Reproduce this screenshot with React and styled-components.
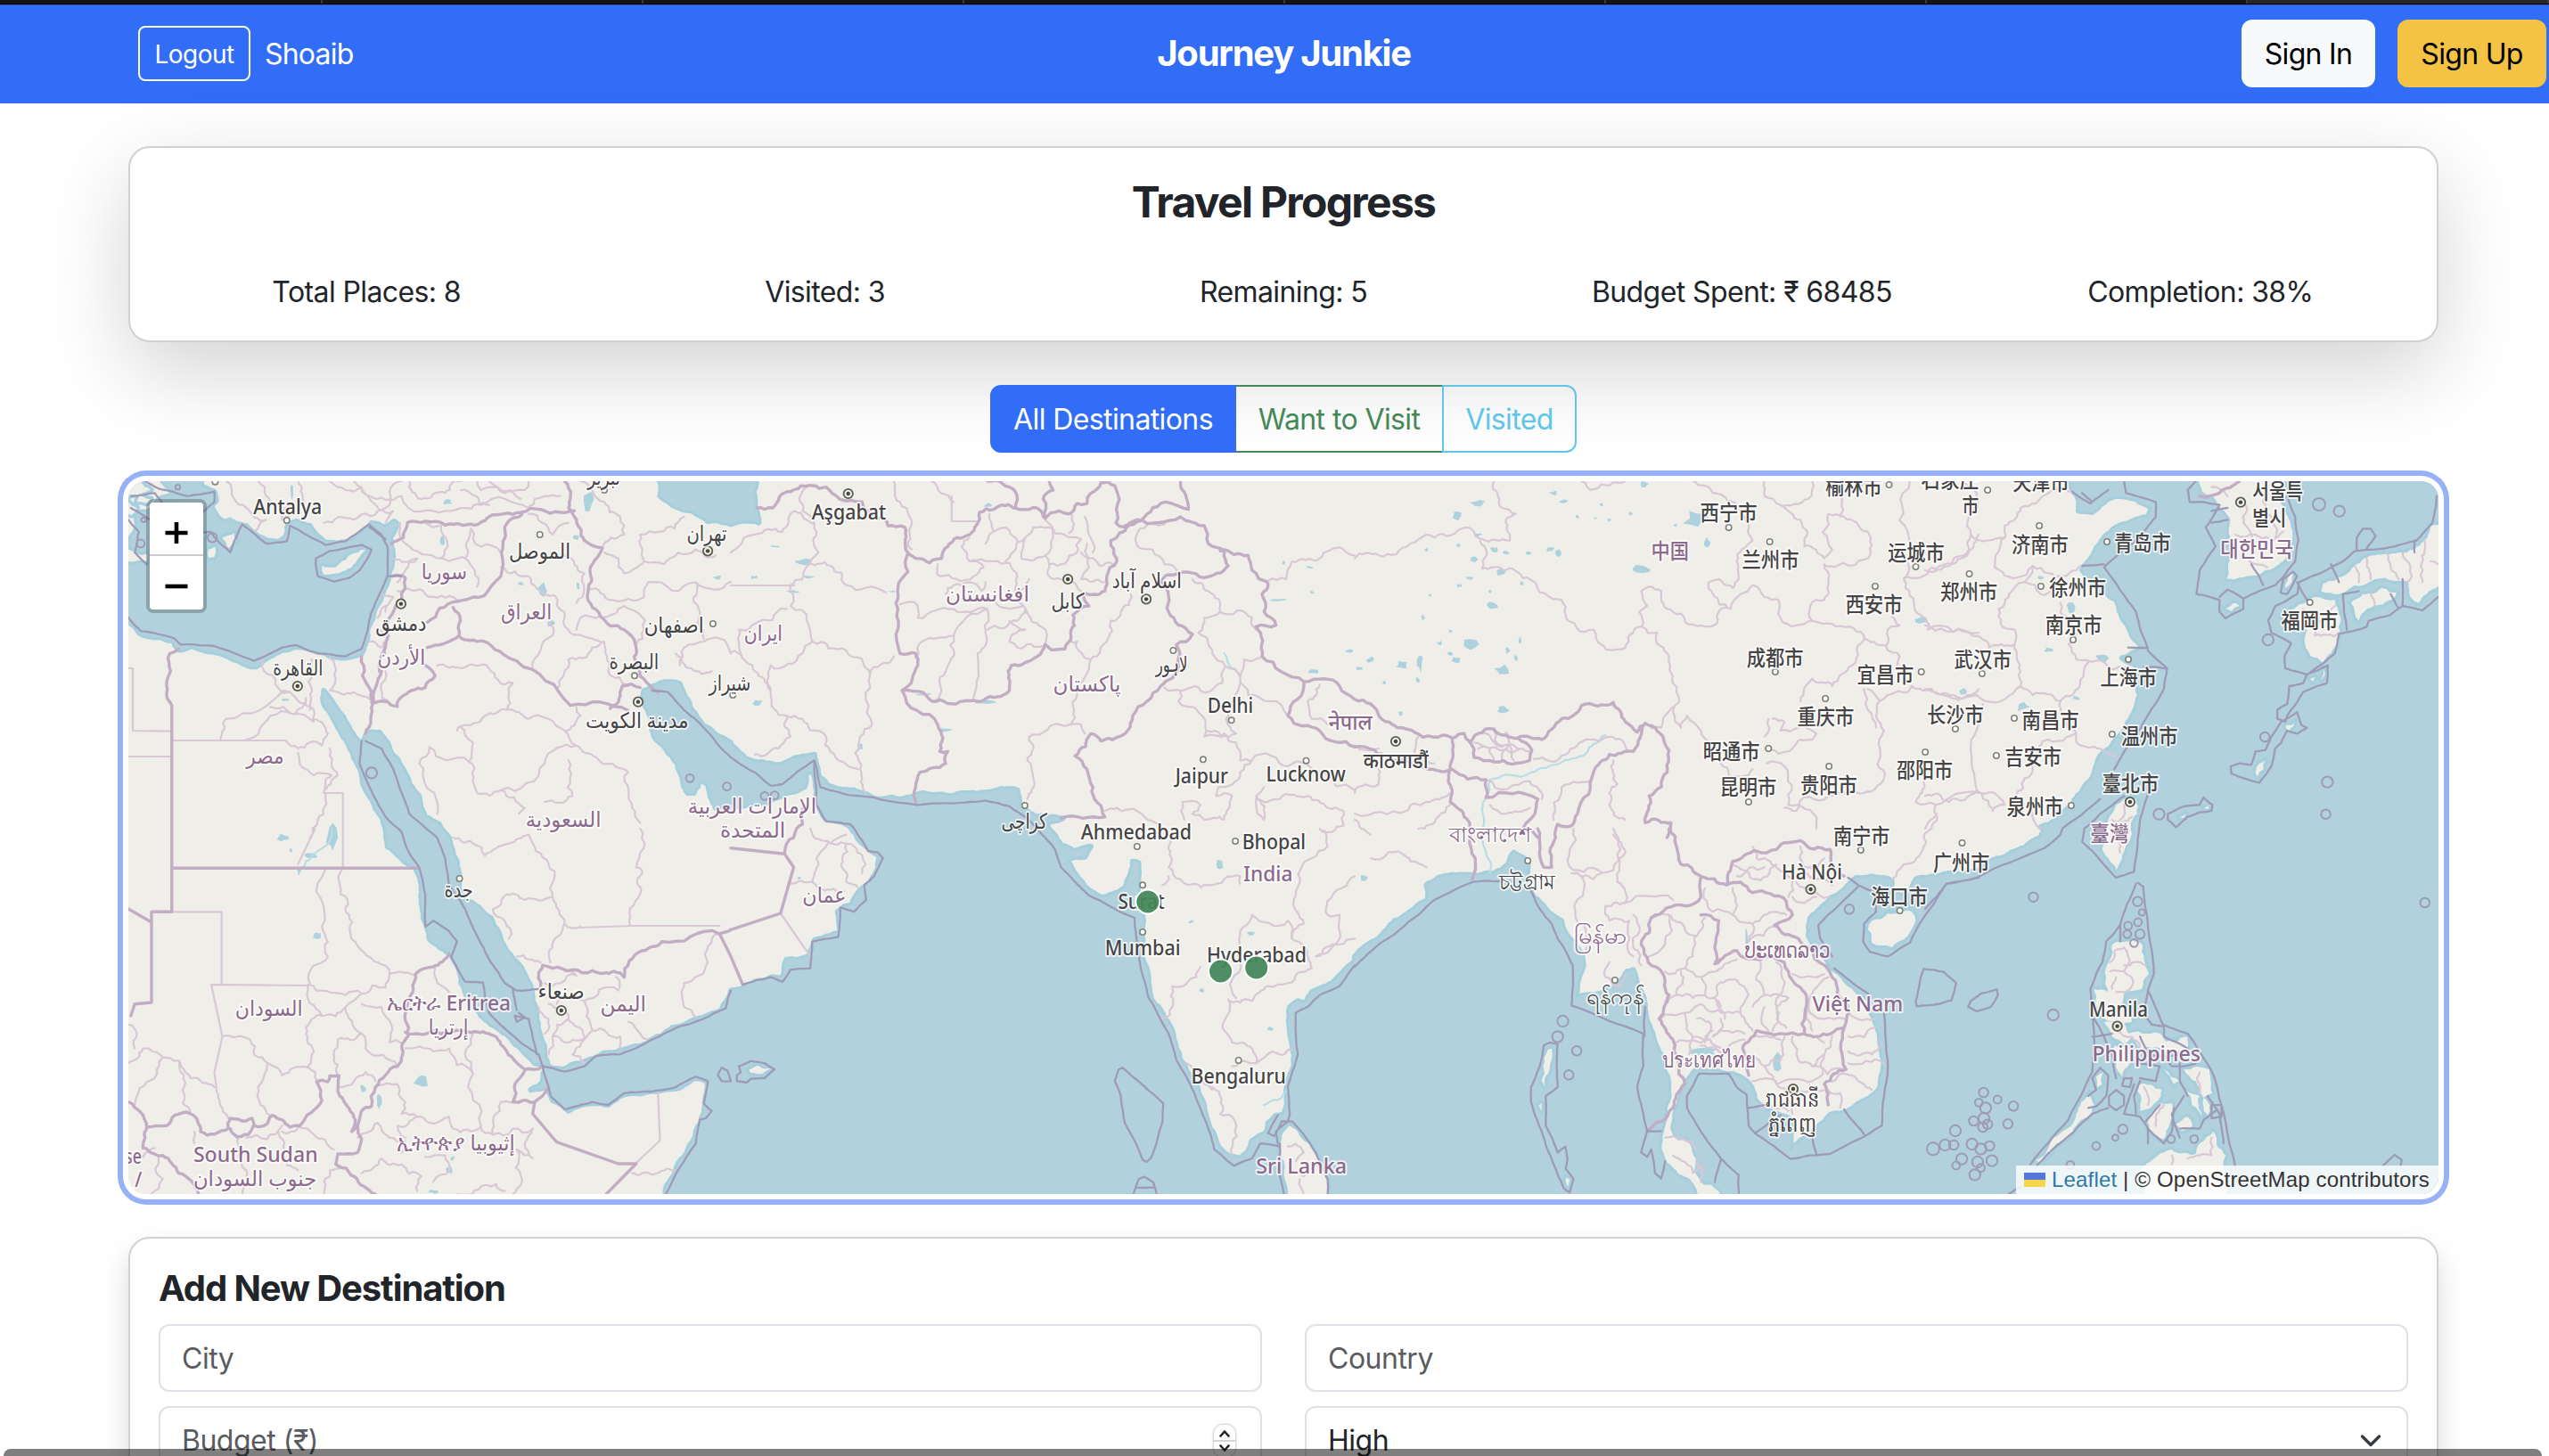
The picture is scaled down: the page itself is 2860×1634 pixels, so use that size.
import React from 'react';
import styled, { createGlobalStyle } from 'styled-components';

const GlobalStyle = createGlobalStyle`
  * { box-sizing: border-box; }
  html, body { margin: 0; padding: 0; }
  body {
    background: #fff;
    color: #212529;
    font-family: Inter, "Noto Sans", "Liberation Sans", sans-serif;
    font-size: 32px;
    line-height: 48px;
    overflow: hidden;
  }
`;

/* ---------- page chrome ---------- */

const Page = styled.div`
  display: flex;
  flex-direction: column;
  position: relative;
  width: 2860px;
  height: 1634px;
  overflow: hidden;
`;

const TabStrip = styled.div`
  display: grid;
  grid-template-columns: 362px repeat(6, 360px) 1fr;
  flex: none;
  height: 5px;
  background: #141414;
  border-bottom: 1px solid #000;
`;

const TabEdge = styled.span`
  background: ${(p) => (p.$active ? '#262626' : '#141414')};
  border-right: 2px solid #3a3a3a;
`;

const Navbar = styled.header`
  display: grid;
  grid-template-columns: 1fr auto 1fr;
  align-items: center;
  flex: none;
  height: 111px;
  padding: 0 3px 2px 24px;
  background: #316df6;
  border-top: 1px solid #2a55b5;
  color: #fff;
`;

const NavSide = styled.div`
  display: flex;
  align-items: center;
  justify-content: ${(p) => (p.$end ? 'flex-end' : 'flex-start')};
  gap: ${(p) => (p.$end ? 25 : 16)}px;
  padding-left: ${(p) => (p.$end ? 0 : 131)}px;
`;

const LogoutButton = styled.button`
  width: 126px;
  height: 62px;
  padding: 2px 0 0;
  border: 2px solid #fff;
  border-radius: 8px;
  background: transparent;
  color: #fff;
  font: 400 28px/42px Inter, sans-serif;
  letter-spacing: -0.55px;
`;

const UserName = styled.span`
  padding-top: 2px;
  letter-spacing: -0.8px;
`;

const Brand = styled.h1`
  margin: 0;
  font-size: 40px;
  font-weight: 700;
  line-height: 60px;
  letter-spacing: -1.25px;
`;

const NavButton = styled.button`
  width: ${(p) => p.$w}px;
  height: 76px;
  padding: 2px 0 0;
  border: 0;
  border-radius: 12px;
  background: ${(p) => p.$bg};
  color: #000;
  font: 400 32px/48px Inter, sans-serif;
  letter-spacing: -0.7px;
`;

const Main = styled.main`
  display: flex;
  flex-direction: column;
  flex: none;
  padding: 48px 124px 0 144px;
`;

const Card = styled.section`
  flex: none;
  border: 2px solid #d0d0d0;
  border-radius: 24px;
  background: #fff;
  box-shadow: ${(p) => p.$shadow};
`;

const ProgressCard = styled(Card)`
  height: 220px;
  padding: 32px 8px 0;
`;

const CardTitle = styled.h2`
  margin: 0;
  font-size: ${(p) => p.$size}px;
  font-weight: 700;
  line-height: 58px;
  letter-spacing: ${(p) => p.$ls}px;
  text-align: ${(p) => p.$align};
`;

const Stats = styled.div`
  display: grid;
  grid-template-columns: repeat(5, 1fr);
  margin-top: 48px;
  text-align: center;
  letter-spacing: -0.6px;
  line-height: 48px;
`;

const Filters = styled.div`
  display: flex;
  align-self: center;
  margin: 48px 0 32px;
`;

const FilterButton = styled.button`
  width: ${(p) => p.$w}px;
  height: 76px;
  padding: 2px 0 0;
  border: 2px solid ${(p) => p.$color};
  ${(p) => (p.$open ? 'border-right: 0; border-left: 0;' : '')}
  border-radius: ${(p) => p.$radius};
  background: ${(p) => (p.$filled ? p.$color : 'transparent')};
  color: ${(p) => (p.$filled ? '#fff' : p.$color)};
  font: 400 32px/48px Inter, sans-serif;
  letter-spacing: -0.6px;
`;

/* ---------- map ---------- */

const MapFrame = styled.div`
  position: relative;
  flex: none;
  width: 2592px;
  height: 800px;
  border-radius: 20px;
  background: #f0eee8;
  box-shadow: 0 0 0 6px #fff, 0 0 0 12px #96b1f5;
`;

const MapCanvas = styled.svg`
  display: block;
  width: 2592px;
  height: 800px;
  border-radius: 20px;
`;

const ZoomControl = styled.div`
  position: absolute;
  top: 20px;
  left: 20px;
  display: flex;
  flex-direction: column;
  width: 68px;
  border: 4px solid rgba(0, 0, 0, 0.22);
  border-radius: 8px;
  background-clip: padding-box;
`;

const ZoomButton = styled.button`
  display: grid;
  place-items: center;
  height: 60px;
  padding: ${(p) => (p.$first ? '10px' : '8px')} 0 0;
  border: 0;
  border-bottom: ${(p) => (p.$first ? '2px solid #ccc' : '0')};
  border-radius: ${(p) => (p.$first ? '4px 4px 0 0' : '0 0 4px 4px')};
  background: #fff;
`;

const Attribution = styled.div`
  position: absolute;
  right: 0;
  bottom: 0;
  display: flex;
  align-items: center;
  width: 474px;
  height: 32px;
  padding-left: 9px;
  border-bottom-right-radius: 20px;
  background: rgba(255, 255, 255, 0.8);
  color: #333;
  font: 24px/32px "Liberation Sans", Arial, sans-serif;
  letter-spacing: 0.17px;
  white-space: pre;
`;

const Flag = styled.span`
  width: 24px;
  height: 16px;
  margin-right: 7px;
  background: linear-gradient(#5577dc 50%, #f7d648 50%);
`;

const LeafletLink = styled.span`
  color: #2e79a7;
`;

/* Sheets of the survey grid: origin on the map, in map pixels. */
const SHEETS = {
  A: [-24, -20], B: [676, -20], C: [1376, -20], D: [2016, -20],
  E: [-24, 390], F: [676, 390], G: [1376, 390], H: [2016, 390],
};

const at = (sheet, x, y) => [SHEETS[sheet][0] + x / 2.24, SHEETS[sheet][1] + y / 3];

function parse(trace) {
  let sheet = 'A';
  const pts = [];
  trace.trim().split(/\s+/).forEach((token) => {
    if (SHEETS[token]) { sheet = token; return; }
    const [x, y] = token.split(',').map(Number);
    pts.push(at(sheet, x, y));
  });
  return pts;
}

const noise = (x, y) => {
  const s = Math.sin(x * 12.9898 + y * 78.233) * 43758.5453;
  return (s - Math.floor(s)) * 2 - 1;
};

/* Midpoint displacement gives borders and coasts their ragged run. */
function ragged(pts, amount, closed) {
  let line = closed ? [...pts, pts[0]] : pts;
  for (let pass = 0; pass < 3; pass += 1) {
    const next = [line[0]];
    for (let i = 1; i < line.length; i += 1) {
      const [ax, ay] = line[i - 1];
      const [bx, by] = line[i];
      const len = Math.hypot(bx - ax, by - ay);
      if (len > 6) {
        const k = noise(ax + bx, ay + by) * amount * Math.min(len, 44);
        next.push([(ax + bx) / 2 - ((by - ay) / len) * k, (ay + by) / 2 + ((bx - ax) / len) * k]);
      }
      next.push(line[i]);
    }
    line = next;
  }
  return line;
}

const toPath = (pts, closed) =>
  'M' + pts.map((p) => p[0].toFixed(1) + ' ' + p[1].toFixed(1)).join('L') + (closed ? 'Z' : '');

const shape = (t, amount = 0.12) => toPath(ragged(parse(t), amount, true), true);
const line = (t, amount = 0.16) => toPath(ragged(parse(t), amount, false), false);

const SEAS = [
  // Mediterranean and Aegean
  'A 30,525 30,330 54,320 60,250 75,215 70,170 100,165 130,120 165,105 140,60 150,40 235,40 240,80 270,95 275,125 262,150 285,190 320,200 350,210 370,235 400,258 430,265 448,250 455,205 475,195 510,210 545,265 580,270 615,262 650,225 665,200 700,215 722,195 732,205 712,250 718,290 715,350 705,400 690,450 670,510 655,590 640,640 600,655 560,650 520,630 475,618 440,628 410,650 375,685 330,665 285,640 210,615 180,628 165,595 130,585 80,570 54,530',
  // Red Sea, Persian Gulf, Arabian Sea, Bay of Bengal
  'A 545,765 570,810 600,870 640,945 655,905 685,905 705,940 735,1010 760,1080 785,1120 800,1190 835,1215 860,1260 E 865,60 880,110 885,170 895,240 935,265 965,300 985,350 1000,400 1030,450 1050,490 1065,530 1070,580 1080,640 1090,700 1100,760 1110,800 1145,810 1190,790 1250,755 1310,740 1370,710 1420,670 1500,635 1545,610 1568,545 F 0,545 60,515 100,500 130,500 140,440 195,430 210,375 250,360 275,350 268,280 285,262 305,255 320,215 350,180 370,130 372,90 340,60 315,20 B 325,1260 290,1215 240,1200 215,1130 205,1040 190,1040 185,1090 140,1110 90,1145 40,1150 0,1160 A 1530,1160 1510,1080 1490,1065 1475,1110 1460,1110 1440,1040 1420,985 1380,930 1368,860 1345,800 1350,765 1390,740 1440,742 1470,830 1500,885 1568,940 B 0,945 50,1000 110,1015 150,1000 210,980 225,1060 245,1085 330,1110 430,1130 520,1115 600,1110 680,1095 720,1100 725,1150 770,1190 835,1195 F 790,-20 810,15 830,55 860,75 905,60 890,95 845,105 860,140 890,195 930,230 960,220 990,200 1005,150 1010,110 1025,115 1025,180 1030,250 1035,330 1035,430 1050,520 1065,590 1090,640 1110,680 1120,740 1130,780 1170,860 1190,930 1205,1010 1225,1070 1255,1105 1280,1110 1300,1085 1310,1050 1345,1025 1350,990 1370,965 1390,960 1395,880 1400,860 1415,790 1412,740 1403,660 1405,600 1425,580 1445,585 1460,550 1510,520 1540,480 1568,445 G 0,430 60,370 100,310 150,270 185,235 180,190 210,165 245,155 290,155 350,150 385,120 400,80 435,110 435,170 450,230 480,270 520,310 540,370 570,420 575,460 560,520 555,570 600,560 650,535 685,480 700,475 710,520 730,590 740,660 755,720 770,760 785,830 790,900 780,960 770,1020 765,1080 780,1130 810,1170 840,1190 855,1230 855,1260 E 1395,1260 1430,1150 1460,1080 1480,1020 1500,960 1505,900 1510,850 1480,840 1430,875 1380,885 1300,895 1260,930 1220,925 1160,950 1120,915 1105,870 1065,880 1095,850 1100,800 1075,790 1040,740 990,680 940,630 905,570 890,520 880,460 860,420 810,370 795,300 790,200 775,130 740,100 705,60 700,0 A 690,1190 665,1130 640,1050 620,990 600,930 565,850 542,790',
  // Caspian Sea
  'A 1385,40 1390,110 1420,140 1470,160 1510,195 1568,205 B 0,205 70,200 62,150 65,40',
  // Gulf of Thailand, South China Sea, Yellow Sea, Pacific
  'G 940,1260 920,1215 900,1190 880,1190 860,1150 865,1110 850,1060 835,1035 815,1040 800,1010 805,960 820,900 835,850 860,810 910,815 950,825 985,850 1000,880 1005,910 1030,950 1070,965 1100,980 1095,1085 1120,1050 1160,1010 1200,960 1240,950 1290,910 1320,870 1330,790 1320,720 1305,640 1290,570 1240,520 1200,470 1170,410 1140,360 1145,300 1170,270 1200,230 1240,190 1260,165 1300,160 1350,175 1345,215 1375,225 1400,200 1410,170 1440,165 1500,150 1568,140 H 160,110 200,95 250,65 290,30 300,5 D 290,1225 330,1200 370,1150 400,1090 425,1040 440,985 470,950 500,900 520,850 540,780 530,740 540,690 495,655 550,620 520,580 500,530 480,460 450,430 410,390 395,360 410,330 440,270 480,215 520,195 560,180 570,150 530,120 480,110 440,140 420,165 385,160 385,120 370,90 365,40 680,40 690,100 720,120 740,160 760,190 760,250 770,300 755,340 750,400 780,400 840,385 880,360 915,320 930,250 925,200 900,130 915,110 900,40 1310,40 1310,1260 H 1310,1260',
];

const ISLANDS = [
  'A 540,345 575,350 600,325 640,290 650,292 625,335 600,360 570,372 545,375',
  'A 290,250 320,235 325,260 305,285', 'A 255,290 272,280 270,315 256,318', 'A 54,290 100,305 100,330 54,330',
  'A 80,110 110,120 100,135 75,130', 'A 150,140 170,135 165,150', 'A 205,175 225,180 218,190', 'A 235,230 245,228 243,250',
  'F 45,812 70,798 100,808 80,824 50,822', 'F 1390,1020 1402,1000 1440,1050 1470,1100 1490,1160 1495,1260 1410,1260 1395,1190 1390,1120',
  'G 1300,310 1340,285 1400,280 1410,310 1390,360 1350,400 1300,385 1290,340',
  'D 500,1130 530,1130 533,1180 H 515,40 495,90 480,140 465,110 445,70 455,20 D 455,1220 470,1180',
  'D 1310,190 1270,210 1255,260 1230,290 1190,300 1130,310 1080,345 1050,380 1000,405 995,430 1040,440 1080,410 1130,390 1180,395 1215,400 1220,450 1240,470 1260,440 1310,370',
  'D 1070,470 1100,440 1150,420 1185,435 1150,475 1110,490 1090,530 1080,500',
  'D 900,520 940,475 980,450 1030,460 1045,520 1040,580 1020,640 1000,670 970,650 955,610 960,560 910,550',
  'D 905,420 912,385 925,370 922,400', 'D 755,490 775,470 790,480 770,497', 'D 1000,690 1005,710 995,730', 'D 968,725 980,720 975,735',
  'D 830,1040 840,1010 855,1000 850,1030 835,1055', 'D 905,885 930,870 915,900', 'D 640,1190 655,1180 650,1195', 'D 700,1160 715,1150 710,1165',
  'G 485,745 495,740 490,810 478,870 470,850', 'G 463,930 470,925 470,950', 'G 530,1175 540,1180 535,1205',
  'H 470,390 490,380 545,388 550,440 562,490 545,540 500,555 495,590 520,650 490,660 450,640 430,590 425,540 460,550 455,500 465,440',
  'H 510,690 560,690 600,715 660,700 655,740 600,745 540,740', 'H 475,730 510,730 515,790 495,835 480,790',
  'H 650,810 715,812 722,890 700,905 680,850', 'H 535,865 595,880 585,915 540,950', 'H 590,925 620,925 615,990 600,1045 565,1020 560,980',
  'H 630,995 660,970 672,1000 640,1015', 'H 415,890 425,930 380,1000 330,1060 290,1130 278,1115 320,1040 380,960', 'H 430,835 448,820 445,860 432,870',
  'H 545,1140 600,1090 620,1080 680,1095 690,1060 725,1020 755,1100 765,1260 560,1260', 'H 600,810 640,850 625,860', 'H 655,880 690,900 695,980 670,930',
  'H 450,650 500,655 520,700 500,725 470,700', 'H 700,905 715,930 712,970 700,950', 'H 560,690 590,690 610,720 640,745 600,735', 'H 640,705 655,700 660,735 650,745',
  'A 54,70 85,62 110,90 80,105 54,110', 'A 54,130 75,150 62,175 54,170', 'A 110,165 125,160 120,178',
];

const LAKES = [
  ['E', 790, 848, 7, 7], ['C', 310, 135, 9, 3], ['C', 258, 177, 5, 4], ['C', 858, 190, 12, 9], ['C', 722, 357, 9, 4], ['C', 287, 610, 9, 6],
  ['C', 372, 697, 8, 5], ['C', 118, 680, 6, 4], ['C', 40, 662, 4, 3], ['C', 165, 672, 3, 8], ['C', 348, 478, 6, 4], ['C', 372, 832, 6, 4],
  ['C', 290, 386, 5, 2], ['C', 300, 325, 4, 3], ['C', 367, 366, 5, 3], ['C', 350, 290, 4, 3], ['C', 728, 70, 5, 3], ['C', 500, 100, 4, 2],
  ['C', 215, 605, 3, 2], ['C', 240, 640, 4, 2], ['C', 385, 630, 3, 3], ['C', 415, 595, 2, 3], ['C', 405, 655, 2, 4], ['C', 490, 290, 5, 2],
  ['C', 437, 302, 3, 2], ['C', 512, 302, 3, 3], ['C', 115, 842, 2, 3], ['C', 75, 738, 2, 3], ['C', 172, 520, 2, 3], ['C', 260, 275, 2, 2],
  ['C', 180, 290, 2, 2], ['C', 605, 185, 2, 1.5], ['C', 640, 190, 2, 1.5], ['C', 560, 180, 2, 1.5], ['C', 694, 170, 2, 2], ['C', 805, 208, 3, 1.5],
  ['C', 885, 265, 3, 5], ['C', 158, 730, 2, 3], ['C', 420, 405, 2, 2], ['C', 190, 445, 2, 1.5], ['C', 1425, 530, 6, 4], ['C', 1530, 768, 4, 3],
  ['C', 255, 662, 4, 3], ['C', 340, 432, 2, 2], ['C', 262, 412, 3, 2], ['C', 240, 565, 2, 2], ['C', 12, 690, 3, 2], ['C', 525, 128, 4, 2], ['C', 620, 140, 2, 1.5], ['C', 380, 300, 3, 2], ['C', 310, 240, 4, 2],
  ['B', 182, 332, 10, 3], ['B', 107, 280, 5, 1], ['B', 58, 384, 4, 2], ['B', 195, 383, 5, 1.5], ['B', 155, 432, 6, 1.5], ['B', 540, 898, 7, 2],
  ['B', 640, 805, 9, 2], ['B', 485, 778, 7, 1.5], ['B', 68, 805, 6, 3], ['B', 325, 955, 4, 3], ['B', 1465, 700, 5, 3], ['B', 1555, 632, 5, 2],
  ['B', 1372, 460, 9, 1.5], ['B', 1455, 350, 3, 1.5], ['B', 1460, 435, 3, 1.5], ['B', 1390, 335, 2, 2], ['B', 645, 142, 4, 2], ['B', 405, 432, 4, 1],
  ['A', 1210, 120, 5, 11], ['A', 1097, 430, 4, 9], ['A', 1040, 405, 4, 2], ['A', 1115, 540, 4, 3], ['A', 845, 265, 3, 6], ['A', 1183, 412, 2, 4],
  ['A', 465, 90, 2, 8], ['A', 855, 130, 6, 3], ['A', 310, 190, 5, 2], ['A', 1180, 250, 3, 3], ['A', 450, 795, 4, 2], ['A', 1535, 385, 4, 2],
  ['E', 565, 30, 5, 12], ['E', 515, 92, 10, 3], ['E', 445, 30, 6, 4], ['E', 683, 925, 3, 8], ['E', 645, 875, 3, 4], ['E', 530, 360, 4, 4],
  ['E', 462, 72, 2, 2], ['E', 483, 142, 2, 4], ['E', 868, 1110, 2, 3], ['E', 860, 1150, 3, 4], ['E', 822, 1222, 5, 2],
  ['F', 1228, 118, 4, 5], ['F', 1157, 313, 3, 2], ['F', 1307, 353, 4, 2], ['F', 1185, 545, 3, 2], ['F', 1355, 675, 3, 2], ['F', 172, 166, 2, 2],
  ['G', 25, 165, 6, 3], ['G', 1060, 785, 5, 9], ['G', 880, 752, 14, 4], ['G', 985, 370, 2, 9],
  ['D', 445, 655, 6, 6], ['D', 310, 628, 5, 3], ['D', 245, 820, 8, 4], ['D', 365, 485, 4, 6], ['D', 290, 385, 4, 2], ['D', 95, 768, 3, 3], ['D', 380, 790, 5, 2],
];

const RIVERS = [
  'C 630,915 600,945 560,990 500,1015 460,1030 430,1050 380,1048 340,1065 328,1130 325,1200 G 330,80 340,150',
  'E 565,0 560,40 530,75 500,110 488,135', 'B 1240,640 1270,700', 'F 1340,930 1400,880',
];

const BORDERS = [
  'A 715,270 745,250 755,200 800,195 850,208 910,205 960,180 1040,165 1090,155 1140,165 1175,160',
  'A 1045,165 1000,225 990,380 975,400 880,465 805,535',
  'A 1150,60 1165,110 1160,150 1180,190 1200,260 1245,285 1220,340 1210,420 1240,515 1300,560 1328,610 1335,690 1385,770',
  'A 870,485 885,580 945,598 1030,665 1165,815 1310,832', 'A 885,580 805,620', 'A 1265,825 1295,750 1340,755',
  'A 665,805 730,818 765,765 800,755 825,715 800,680', 'A 640,650 665,770 668,810 650,910', 'A 690,700 670,800', 'A 718,380 750,385 750,420 720,500 700,620 685,700',
  'A 180,625 158,640 160,700 150,740 163,815', 'E 860,420 820,465 775,490 770,540 750,620 745,720 730,800 700,830 675,870 665,935 640,950 630,1000 615,1020 620,970 585,900 583,832 560,832 555,852 527,852 540,915 485,1000 460,1005 415,965 395,1000 370,1000 365,975 310,975 305,1010 235,1020 210,960 170,965 150,1000 100,1005 54,920',
  'E 630,1000 630,1090 580,1095 575,1130 620,1170 675,1230', 'E 100,1005 90,1075 140,1100 180,1160 230,1230',
  'E 310,1010 320,1030 355,1030 368,1000',
  'E 750,685 780,690 820,680 900,680 960,690 1000,740 1050,810 1095,800', 'E 1050,815 1025,860 1020,920 1075,920 1110,870',
  'E 1090,530 1095,460 1120,470 1220,478 1275,480 1300,500 1345,410 1395,380 1540,355 1568,340',
  'F 135,85 140,50 165,0 B 180,1215 185,1150',
  'B 65,150 105,150 150,95 205,75 240,80 260,105 330,130 395,210 437,215 445,300 420,420 415,470 425,640 465,640 470,680 430,765 520,880 525,970 545,970 540,1010 475,1040 465,1145',
  'B 445,300 500,335 530,320 545,280 600,240 625,165 660,155 680,140 710,150 775,155 790,185 825,160 850,170 870,135 895,135 905,100 930,65 965,75 968,200 990,215 1020,190 1130,180',
  'B 645,60 715,95 715,150', 'B 800,60 810,90 785,120 790,185', 'B 990,210 1060,150 1150,155 1130,60',
  'B 430,765 505,800 585,800 650,785 700,765 705,680 770,650 790,610 840,625 855,580 860,510 900,480 885,440 940,430 945,380 970,330 955,260 1000,210',
  'B 1130,180 1190,210 1200,270 1240,300 1250,345 1190,385 1100,375 1080,400 1100,500 1160,575 1120,610 1125,680 1080,750 1010,850 985,915 930,935 905,910 865,985 895,1030 910,1090 940,1190 830,1195',
  'B 1230,295 1300,310 1310,360 1350,405 1335,440 1370,545 1320,550 1335,650 1440,735 1400,850 1480,900 1568,955 C 50,965 100,1000 185,1030 240,1030 245,925 150,905 120,890 95,880 40,810 0,795 B 1530,750 1490,725 1440,735',
  'C 245,925 275,910 290,940 300,990 350,1005 440,1000 445,965 410,925 350,895 310,910 290,940',
  'C 410,925 470,930 520,860 570,815 650,805 680,870 710,905 730,875 780,945 785,1040 740,1120 730,1210', 'C 730,875 700,970 640,980 600,1040 560,1180 545,1220 510,1215 505,1260 G 495,130 475,130 460,0',
  'C 240,1030 245,1100 240,1140 275,1190 290,1260 G 295,170', 'C 245,1030 330,1065 330,1125 460,1130 440,1200 425,1225 460,1260',
  'C 730,1210 795,1210 785,1260 G 790,0 820,120 870,160 935,190 950,110 1010,75 1060,70 1120,40 1195,70 1195,120 1230,160',
  'G 870,160 870,230 830,260 745,300 740,350 720,390 775,490 790,560 765,640 800,710 830,860 800,940 735,1020', 'G 870,290 915,310 905,455 960,410 1080,450 1100,510',
  'G 935,190 970,180 1000,215 1085,245 1100,290 1055,325 1115,370 1200,500 1240,600 1230,670 1235,810 1180,860 1190,930', 'G 1095,500 1135,560 1130,690 1010,680 975,740 990,830', 'G 1130,690 1160,700 1230,670',
  'D 690,110 740,100 790,60',
];

const STRAIGHT_BORDERS = [
  'A 163,815 163,1260 E 163,280 112,280 112,585 70,590 60,630', 'E 163,133 780,133', 'E 54,270 112,315', 'E 1075,920 1070,960 1130,1055 1285,1128 1330,1128 1255,1230',
  'E 1568,340 F 0,340 125,285 158,130 135,85 0,65', 'E 1540,355 1568,430 F 0,430 30,525',
];

const STRAIGHT_REGIONS = [
  'A 54,690 65,690 65,900 160,902', 'A 54,987 160,987', 'A 163,933 450,933', 'E 163,280 288,280 288,525', 'E 262,525 505,528', 'E 262,525 268,560 290,700 270,820 275,870',
  'E 593,0 593,133', 'A 593,1260 593,1110 550,1110', 'E 1190,333 1320,327 1540,327', 'F 125,285 200,430', 'E 1330,1125 1390,1050 1385,890', 'E 523,0 480,120', 'B 0,411 160,411', 'B 555,110 555,195 620,195',
];

const REGIONS = [
  'A 560,60 600,90 640,80 660,120 720,160 700,200', 'A 480,60 495,130 450,180', 'A 545,200 620,190 700,150 740,60', 'A 620,60 660,110 740,110 850,160 900,150 960,140', 'A 760,60 790,120 850,100 890,60', 'A 890,90 940,140 1060,150 1100,110 1140,110',
  'A 300,60 320,120 350,150 400,190 370,230', 'A 380,60 400,110 460,140 440,190', 'A 960,60 1000,100 1050,90 1060,60', 'A 930,60 940,90 1040,120', 'A 735,200 750,270 840,320 900,320 915,220', 'A 840,320 840,210 800,200', 'A 900,320 930,415', 'A 720,320 780,320 750,360 730,400', 'A 730,430 800,440 880,460', 'A 915,220 990,300',
  'A 990,350 1060,380 1080,420 1150,500 1160,560 1220,590 1250,600', 'A 1070,690 1120,580 1110,530', 'A 1130,760 1160,660 1220,620 1250,600 1260,700 1310,750', 'A 1180,560 1190,520 1240,515', 'A 1160,200 1120,240 1060,170', 'A 1100,320 1150,310 1200,370 1180,470',
  'A 1250,300 1300,370 1350,330 1340,240 1390,230 1450,180', 'A 1245,285 1300,240 1290,180 1250,130 1190,60', 'A 1210,420 1270,460 1350,450 1360,400 1480,400 1568,398', 'A 1350,330 1400,340 1480,290 1530,310', 'A 1240,515 1300,480 1350,560 1330,610', 'A 1440,680 1450,620 1500,600 1540,590 1568,640', 'A 1430,640 1470,690 1520,700', 'A 1480,400 1490,500 1500,590',
  'A 395,640 395,700 460,770 300,860 285,930', 'A 460,770 480,800 510,820 520,870 410,850 350,930', 'A 515,660 515,760 510,830', 'A 560,655 560,765 620,770 665,800', 'A 410,820 470,845 500,790', 'A 450,935 480,960 540,950 555,910 520,860', 'A 480,975 520,1050 565,1050 545,1110 580,1050 560,960',
  'A 550,1110 530,1200 510,1260', 'A 700,700 710,810', 'A 830,680 890,690 960,690 1020,740 1005,830 950,850 890,885 880,900', 'A 890,885 920,940 910,1005 810,955 785,1010 800,1080 830,1180', 'A 910,1005 930,1110 990,1100 1050,1160 1035,1180', 'A 1005,830 1060,860 1150,900 1190,850 1180,820', 'A 1150,900 1180,950 1100,1010 990,1100', 'A 1180,950 1230,990 1310,1040 1320,1160 1340,1210', 'A 1160,1000 1170,1120 1100,1140',
  'A 690,440 720,450 700,500', 'A 685,560 710,580 690,640', 'A 700,480 680,520', 'A 660,600 690,620',
  'E 1340,0 1330,130 1345,140 1340,220 1315,327', 'E 870,30 920,50 950,90 1010,50 1060,20', 'E 1060,20 1110,120 1120,230 1150,320 1190,330', 'E 1120,230 1050,240 1000,225 970,270 1000,310 1010,370', 'E 1150,320 1120,400 1115,450', 'E 1280,500 1285,545 1200,580 1130,590', 'E 1540,355 1510,450 1450,520 1450,600 1480,635', 'E 1200,580 1220,680 1290,700 1290,740',
  'E 1110,590 1160,640 1120,700 1110,760', 'E 1160,640 1200,700 1170,760 1200,790', 'E 1120,700 1170,710 1220,680', 'E 1150,480 1180,495 1140,520 1100,520', 'E 1310,650 1340,690 1360,710', 'E 1030,430 1060,440 1090,450', 'E 1085,600 1110,640 1100,690',
  'E 548,140 540,330 555,380 555,430 510,520', 'E 590,140 585,190 605,240 610,340 630,395 680,450 710,490 770,492', 'E 505,525 600,560 640,555 700,535 710,490', 'E 640,555 600,600 540,630 500,670 520,750 505,800 530,850', 'E 600,600 640,690 580,710 570,760 583,832', 'E 640,590 690,600 715,660 710,720 745,720', 'E 640,690 650,740 730,800', 'E 290,700 360,710 405,790 380,870 385,930 410,965',
  'E 405,790 440,830 470,805 505,805', 'E 270,870 210,840 180,780 140,770 120,840 70,930', 'E 54,790 90,740 140,770', 'E 275,870 290,940 305,975', 'E 180,780 190,880 210,960', 'E 54,660 75,690 70,740', 'E 585,870 650,820 675,850', 'E 505,528 540,630',
  'E 825,470 830,520 860,550', 'E 750,740 820,750 860,740 920,825 940,1000', 'E 920,690 920,825', 'E 680,865 730,860 750,920 740,960 780,970 810,990 860,970 870,1010 940,1000', 'E 780,970 730,1000 750,1040', 'E 940,1000 970,1030 1070,1010 1050,1060 1070,1110 1030,1080 1040,1200 1020,1230', 'E 990,920 970,1030', 'E 990,920 1020,920',
  'E 630,1040 680,990 710,1040 750,1050 740,1090', 'E 640,1160 690,1110 740,1130 790,1170 780,1220', 'E 800,1105 850,1100 860,1150 820,1190', 'E 220,1020 220,1060', 'E 320,1030 330,1100 350,1150 340,1230', 'E 350,1040 440,1000', 'E 440,1020 520,1030 570,1080', 'E 430,1020 440,1100 480,1150', 'E 130,1100 140,1180 110,1230', 'E 54,1100 120,1075', 'E 545,1230 560,1150 590,1140', 'E 1320,1160 1370,1165 1420,1150 E 1430,1155', 'E 880,1230 950,1200 1000,1220',
  'B 0,300 60,240 130,230 160,160 210,205 220,300 190,350 150,410 150,480 205,600', 'B 190,350 250,345 290,410 390,435', 'B 210,205 180,160 190,80', 'B 25,560 60,540 140,490', 'B 25,640 20,560', 'B 0,635 20,640 60,700 100,760', 'B 205,600 180,640 100,680 100,780 140,850 150,920 120,960 60,980', 'B 205,600 290,630 350,710 410,650', 'B 350,710 355,880 325,920 325,1030 340,1110', 'B 140,850 180,860 200,900 240,920 250,970 320,1030',
  'B 410,60 425,130 450,240 455,290', 'B 505,60 560,130', 'B 520,340 525,380 610,380 635,350 600,330 580,280 600,250', 'B 600,330 660,330 700,335 720,380 715,430', 'B 640,270 660,230 650,170', 'B 660,230 700,225 720,265 690,330', 'B 720,265 740,250 760,215 800,215 880,255 870,300 800,340 790,310 730,320 740,250', 'B 790,310 810,250 790,190', 'B 850,235 855,170', 'B 800,340 800,380 860,400 880,430', 'B 880,300 900,350 880,390 940,400', 'B 895,270 900,320 960,340', 'B 890,180 900,240 910,300',
  'B 425,475 470,480 470,520 560,490 645,490', 'B 470,650 480,600 560,580 645,490', 'B 560,580 540,700 515,800', 'B 645,490 640,570 620,640 610,790', 'B 645,560 720,530 740,490', 'B 700,530 740,560 700,600 720,620 790,610', 'B 740,500 780,550 790,610', 'B 640,400 630,430 560,410 540,440', 'B 750,390 720,430 745,500', 'B 640,460 700,490 735,480',
  'B 1045,210 1020,240 1020,275 1060,290 1090,340 1130,370', 'B 1060,205 1090,205', 'B 1005,440 980,500 955,530 945,600 920,650 905,660 870,600 855,600', 'B 905,660 890,720 870,780 855,880', 'B 745,1130 760,1060 745,1000 750,920 810,880 880,880 890,910', 'B 1160,390 1200,430 1230,500 1190,520 1175,570', 'B 1230,500 1310,520 1320,560', 'B 1175,570 1210,640 1280,720 1290,660 1330,655', 'B 1240,690 1235,740 1200,770 1130,765 1090,755', 'B 1130,765 1125,800 1160,820 1195,900 1270,910 1250,840 1280,720 1300,780 1400,850', 'B 1195,900 1190,920 1240,910 1270,940 1280,1000 1310,1000', 'B 1310,1000 1280,1040 1225,1090 1220,1120 1260,1120 1240,1200 1190,1200 1160,1180 1180,1150 1135,1140 1140,1200',
  'B 1310,1000 1400,1020 1568,1100', 'B 1340,1090 1320,1150 1340,1200 1320,1120 1380,1130 1450,1120 1500,1160 1540,1170 1540,1220 1480,1230', 'B 940,1170 1000,1165 1040,1190 1080,1210', 'B 1480,745 1450,800 1460,860 1500,880', 'B 1350,395 1395,390 1410,330 1480,320 1540,290 1568,310',
  'F 1110,0 1100,60 1100,130 1130,170 1200,190 1240,170 1280,160 1280,185', 'F 1480,0 1500,60 1460,100 1430,180 1430,300 1440,320 1410,370', 'F 1100,160 1085,190', 'F 1568,160 1520,210 1500,290 1530,290 1510,400 1470,430', 'F 1310,290 1400,310 1410,370 1440,400 1460,470 1400,520 1350,530 1310,580 1250,575', 'F 1310,290 1280,360 1280,450 1270,570', 'F 1180,465 1170,500 1110,530 1110,600 1085,640', 'F 1250,575 1240,680 1260,720 1310,740 1320,790 1260,800', 'F 1320,790 1360,750 1410,745', 'F 1210,870 1230,960 1260,970 1260,1100', 'F 1145,790 1180,830 1210,880', 'F 1470,430 1530,390 1568,370', 'F 1400,1070 1420,1060 1440,1090 1420,1120', 'F 1400,1160 1440,1170 1480,1130', 'F 1430,1180 1440,1240', 'F 245,45 215,100 205,180 150,185', 'F 240,40 290,50 280,100 290,180 320,200', 'F 290,50 330,90 330,150', 'F 205,180 230,205 285,210', 'F 200,0 250,50 290,20',
  'C 0,320 60,310 140,270 180,240 260,225 320,255 390,260 380,190 405,170 360,110 350,60', 'C 315,260 320,355 380,360 440,390 480,440 520,460 530,510 600,560 620,610 680,620 720,550 715,500 735,480 720,430 740,415 770,430 800,500 830,530 885,550 910,540 920,490 945,490 970,440 1000,410 1030,450 1065,460 1070,520 1110,545 1150,530', 'C 720,550 760,570 790,650 800,740 805,870 820,890 835,850 870,900 890,940', 'C 800,820 780,850 770,890 730,875', 'C 1150,530 1200,540 1280,580 1250,680 1200,750 1150,725 1120,800', 'C 1150,530 1145,480 1180,460 1190,390 1180,340 1245,345 1290,320 1290,230 1230,180 1190,170 1200,290 1180,320 1130,280 1120,190 1070,140 1030,110 1030,60',
  'C 1070,140 1140,120 1150,60', 'C 850,60 900,100 950,130 990,200 1000,260 960,330 965,390 950,420 890,400 900,440 945,490', 'C 1220,180 1225,110 1290,60', 'C 1395,60 1390,230 1380,390 1410,500 1440,560 1568,570', 'C 1380,385 1450,350 1530,310 1568,240', 'C 1350,515 1370,545 1340,560 1335,615 1280,580', 'C 1335,615 1370,650 1370,690', 'C 1290,760 1320,800 1360,770 1390,770 1400,750 1480,780 1530,790 1568,760', 'C 1320,800 1330,900 1320,960 1330,1060 1280,1110 1190,1120 1110,1170 1080,1160', 'C 1280,760 1290,830 1310,890', 'C 1050,860 1080,870 1070,900 1160,910 1150,930 1100,960 1030,960', 'C 1040,860 1030,920', 'C 1035,1010 1080,1020 1090,1150 1160,1210 1160,1230', 'C 1430,1070 1410,1140 1460,1150 1568,1110', 'C 920,1010 940,1050 1000,1030', 'C 1460,1150 1450,1230 G 1430,60 1380,120 1350,170',
  'C 570,60 640,75 680,60',
  'C 300,940 340,960 350,1000', 'C 320,910 350,940 390,950 400,1000', 'C 350,900 370,950 440,970', 'C 310,960 420,960', 'C 380,905 370,1000', 'C 450,995 530,980 590,930 640,920 690,970', 'C 330,1065 440,1070 470,1130', 'C 650,1000 660,1080 640,1150 680,1200', 'C 600,1050 520,1090 500,1200', 'C 0,1180 130,1170 180,1140 240,1110', 'C 0,1110 60,1080 50,1000', 'C 160,920 150,970 200,1010', 'C 0,950 60,960', 'C 160,1230 210,1190 240,1150', 'C 0,1200 40,1250', 'C 340,1150 380,1180 440,1160',
  'G 550,0 550,140 650,140 650,0', 'G 40,100 130,95 180,130', 'G 545,150 600,170 620,150', 'G 560,150 555,300 580,420', 'G 650,20 680,80 660,180 680,250 630,260 640,310 690,310 700,430', 'G 680,250 800,240', 'G 700,290 700,400 720,460', 'G 640,450 630,500 660,530 680,490', 'G 750,300 790,290 830,340 860,360 880,300', 'G 790,290 780,390 740,430', 'G 860,360 850,430 830,470 780,480', 'G 830,470 870,500 910,480 960,440', 'G 870,500 880,560 920,600 910,530 960,510 990,560 970,620 1000,680', 'G 780,580 850,570 880,560', 'G 820,480 810,560', 'G 770,640 830,620 870,590 930,620 970,620', 'G 1020,450 1030,560 1000,600', 'G 1060,450 1070,560 1050,680', 'G 1090,570 1060,600 1085,670', 'G 830,620 850,700 930,740 980,710', 'G 850,700 840,760', 'G 800,720 870,720 900,680', 'G 920,640 900,700 980,690', 'G 860,640 890,650 880,720',
  'G 1000,60 1010,100 1060,130 1100,180 1090,230', 'G 950,120 1000,170 1060,120', 'G 950,200 950,290 1000,320 1030,290 1085,290', 'G 880,200 900,280 950,290', 'G 1000,320 990,380 1060,330', 'G 1120,60 1140,130 1180,100', 'G 1160,230 1130,250 1100,230', 'G 1190,500 1140,600 1150,680', 'G 1180,560 1240,600', 'G 1100,490 1180,490', 'G 1240,610 1305,640', 'G 1240,700 1310,670', 'G 1240,750 1300,760 1325,730', 'G 1240,790 1330,790', 'G 1190,850 1250,830 1300,880', 'G 1200,700 1180,760 1150,800 1230,810', 'G 1080,700 1070,780 1030,800 1000,760', 'G 1030,800 1060,860 1150,850 1180,760', 'G 1000,850 1060,860 1090,900', 'G 1100,960 1090,900 1180,880', 'G 1020,940 1090,950', 'G 1000,700 1070,710', 'G 780,1040 860,1080', 'G 800,1100 850,1160 880,1140', 'G 860,1110 870,1190',
  'G 910,590 930,640', 'G 1030,560 1090,570', 'G 1030,600 1040,680', 'G 1140,590 1180,640 1230,640', 'G 1160,700 1180,720', 'G 1100,700 1110,760 1150,800', 'G 870,730 930,760', 'G 1190,880 1220,890 1220,940', 'G 1030,130 960,160', 'G 1120,130 1160,170 1200,190', 'G 1110,180 1150,210 1190,230',
  'D 100,60 130,100 110,180 115,240 200,250 200,210 240,150 310,100 370,95', 'D 115,240 110,300 50,340 0,360', 'D 200,250 175,350 230,385 270,345 310,370 380,360 400,345', 'D 270,350 250,400 290,440 320,420', 'D 250,400 210,450 185,490 190,540 225,560 225,610 160,620 110,570 0,545', 'D 340,470 340,500 380,570 360,610 380,660 430,665 480,690 520,680', 'D 225,610 240,700 240,750 270,780 340,800 390,730 410,670', 'D 240,750 150,800 60,780 0,760', 'D 340,800 350,850 380,910 385,945 440,960 480,985', 'D 380,910 310,930 280,990 250,1060 230,1120', 'D 145,810 115,950 130,1100 200,1150 170,1170 140,1110', 'D 130,1100 60,1140 0,1120', 'D 270,1120 290,1230', 'D 0,1230 30,1180',
  'D 800,130 800,200 820,260', 'D 850,110 870,180 880,250 850,290', 'D 780,240 830,240 900,230', 'D 820,260 815,330 860,350', 'D 720,80 760,110', 'D 1110,320 1120,390', 'D 1160,300 1170,350 1190,390', 'D 1200,300 1220,350 1210,400', 'D 1255,260 1250,330 1250,400', 'D 1080,345 1090,400', 'D 1270,330 1310,340', 'D 970,520 980,580 1040,570', 'D 950,490 1000,530 1030,480', 'D 1120,440 1130,480',
  'H 480,1 490,80', 'D 470,1200 520,1190', 'D 500,1150 490,1200', 'H 465,450 500,400 510,430 500,480 465,480', 'H 500,460 555,460', 'H 500,480 520,530 480,550', 'H 480,500 470,540', 'H 490,590 510,630', 'H 480,680 520,700 540,735', 'H 690,820 690,890', 'H 550,870 560,930', 'H 600,930 580,1000', 'H 720,1040 720,1100 660,1110', 'H 620,1100 620,1130',
];

const MARITIME = [
  'A 54,520 85,565 170,590 185,610 270,615 370,665 440,620 475,612 530,640 600,650 640,625 665,500 705,380 705,280 690,240 658,205 600,262 550,275 460,210 452,262 400,270 340,205 310,300 285,270 260,230 210,240 190,200 230,180 270,130 270,95 200,110 130,85 95,60',
  'A 660,215 700,255', 'A 705,380 740,380', 'A 54,190 80,230 70,300 100,340', 'A 60,110 120,100 150,150 110,190 60,150',
  'A 525,320 560,295 640,275 665,290 655,320 635,360 610,385 570,398 530,380 525,345 525,320',
  'A 650,935 690,960 720,1030 735,1090 760,1180 830,1260 E 850,100 860,190 900,270 930,360 960,440 1000,520 1030,545 1085,540', 'A 640,935 635,1010 660,1090 700,1190 740,1240 E 755,70 785,130 800,220 800,330 820,310 860,345 880,380 865,430 900,515 945,518 950,570 960,620 1040,720 1085,760 1095,800 1150,818 1200,800 1230,765 1290,760 1370,710 1400,690 1440,665 1500,640 1555,605 1568,545',
  'E 1035,620 1050,635 1030,650 1025,630 1060,640 1080,760', 'E 1020,540 1030,610',
  'E 1095,800 1110,870 1115,900 1150,945 1220,920 1260,930 1300,890 1370,885 1430,870 1480,835 1510,850 1500,925 1520,950 1505,975 1490,980 1480,1060 1440,1140 1405,1230',
  'E 1545,805 1560,815 1568,850 1545,850 1535,830 1545,805', 'F 20,800 50,782 85,790 110,810 85,840 50,842 40,855 15,850 15,830 25,820 20,800',
  'F 30,525 100,500 130,515 150,475 200,470 205,380 270,365 275,265 310,280 340,240 335,190 360,160 382,100 370,80 345,75 310,0 B 300,1215 240,1205 215,1150 215,1100 210,1000 130,1080 100,1085 60,1040 0,990 A 1500,890 1450,830 1410,770 1370,765', 'B 210,1000 225,1090 290,1115 360,1125 465,1150 560,1145 640,1135 700,1155 740,1190 F 790,30 815,70 830,130 900,225 1015,300 1025,420 1050,570 1100,690 1120,780 1165,890 1195,990 1215,1080 1265,1135 1310,1110 1330,1060 1380,1070',
  'F 1375,965 1350,1025 1365,1035 1385,985 1410,985 1440,1030 1470,1090 1500,1180 1500,1230', 'F 1380,1060 1380,1170 1390,1230', 'F 1375,1060 1370,1020 1400,985 1405,960 1400,870 1425,760 1420,620 1450,600 1480,560 1530,530 1568,460 G 0,465 60,390 160,290 200,240 300,178 370,178',
  'F 985,805 1087,925 1085,985 1055,1110 1045,1122 1035,1115 990,990 980,900 965,850 975,810 985,805', 'F 1012,1230 1025,1180 1040,1172 1062,1190 1070,1230', 'F 1020,1208 1065,1208',
  'G 440,200 465,270 495,320 510,370 548,460 545,595 725,690 725,800 710,870 735,1018 720,1090 735,1105 745,1080 755,1160 770,1178 780,1120', 'G 730,600 728,700', 'G 735,1018 770,1018',
  'G 490,720 510,725 510,870 480,900 480,1000 510,1090 530,1070 535,1110 530,1145 550,1180 540,1225 525,1210 500,1130 470,1020 443,920 443,870 465,800 475,730 490,720',
  'G 835,940 835,900 865,825 940,825 960,870 985,895 990,1000 1010,1030 1095,1112 1195,1095 1325,1000 1340,800 1330,620', 'G 835,940 870,1020 920,1110 965,1165 965,1230', 'G 920,1115 905,1190', 'G 1005,1025 1070,965', 'G 1280,1028 1230,945', 'G 990,940 1040,930', 'G 1160,1095 1150,1040',
  'G 1205,470 1290,555', 'G 1265,195 1165,325 1170,370 1200,430', 'G 1240,165 1265,190 1310,215', 'G 1568,165 1487,185 1440,280 1395,385 1340,430 1295,415 1278,380 1280,320 1310,280 1310,215', 'G 1430,472 1480,482 1512,520 1500,578 1470,590 1412,598 1410,580 1425,490 1430,472',
  'H 55,185 130,165 300,65 340,20 D 345,1230 440,1130', 'H 0,270 55,185', 'D 560,1110 540,1200 H 525,145 480,165 395,45 400,0 D 440,1180 500,1120',
  'H 180,541 183,560 165,600 130,615 108,600 115,580 140,555 180,541',
  'D 500,60 505,100 580,130 580,180 545,240 450,350 530,500 560,630 608,690 600,760 550,870 510,950 475,1030', 'D 395,345 450,340', 'D 550,685 605,690', 'D 370,95 415,135 460,90', 'D 395,100 420,130', 'D 510,620 560,622',
  'D 680,60 660,90 665,130 700,130 740,140 705,215 730,280 690,360 682,440 740,460 740,500 755,522 800,490 800,455 840,430 880,410 930,330 938,260 930,180 910,110', 'D 720,200 760,190', 'D 720,160 760,150', 'D 820,340 850,410', 'D 740,450 760,425 800,455',
  'D 925,365 935,380 910,440 893,435 900,390 925,365', 'D 1285,110 1275,200 1235,260 1180,280 1130,290 1080,295 1050,330 940,400 935,440 880,480 862,530 870,570 920,605 903,650 905,690 960,712 1030,640 1040,575 1110,550 1115,530 1170,510 1200,480 1250,495 1290,450', 'D 1020,340 1040,400', 'D 1200,390 1200,480', 'D 1170,440 1190,490', 'D 935,400 960,460', 'D 1085,290 1085,250 1100,220 1120,220 1132,245 1110,285', 'D 1230,260 1230,300', 'D 1090,430 1050,440 1060,560',
  'D 1012,680 1010,740 985,750 950,770 910,850 905,870 885,860 885,830 910,810 915,750 950,740 960,710 1012,680', 'D 935,838 945,880 960,890 935,910 910,900 895,940 880,960 870,1020 840,1075 770,1045 768,1020 790,1010 820,1015 830,970 855,965 870,920 895,870 935,838',
  'D 630,1225 610,1200 610,1180 650,1155 690,1150 700,1125 722,1150 720,1170 690,1175 660,1190 630,1225',
  'H 535,182 548,195 565,380 575,490 560,545 598,660 660,690 725,830 780,1140', 'H 530,185 490,325 455,380 445,450 415,540 425,700 420,820 360,980 265,1130', 'H 490,325 490,380', 'H 600,665 600,700 660,740', 'H 420,700 470,690', 'H 1150,1135 1180,1098 1198,1115 1195,1135', 'H 210,1230 240,1205',
  'H 480,880 500,900 500,930 480,948 462,930 462,900 480,880', 'H 410,900 430,880 420,840 440,805 460,830 455,900 430,935 410,940', 'H 530,960 525,900 540,850', 'H 555,985 590,930', 'H 560,1010 600,1060 620,1020 625,940', 'H 640,790 640,850 660,900', 'H 640,1010 690,1010 700,980 730,950', 'H 710,900 740,960 750,1060', 'H 540,790 590,800 580,850 540,840', 'H 500,840 520,840 515,870 495,865 500,840',
  'H 560,545 550,620 570,660 600,665', 'H 425,640 450,700 470,760 480,840', 'H 525,860 500,960 540,970 560,1010 560,1060', 'H 650,900 620,960 640,1040', 'H 280,1135 320,1080 420,960 460,940', 'H 600,760 620,800 650,800 680,790', 'H 720,930 745,930 745,970 720,975 720,930', 'H 540,700 560,760 600,770 640,760',
];

const RINGS = [
  ['A', 665, 1042, 7], ['D', 990, 138, 8], ['D', 1041, 161, 7], ['D', 862, 594, 7], ['D', 854, 921, 6], ['D', 1011, 1073, 7], ['D', 1007, 1181, 6], ['D', 588, 1181, 7],
  ['H', 272, 230, 6], ['H', 1256, 249, 6], ['H', 322, 627, 7], ['H', 147, 888, 6], ['H', 182, 912, 5], ['H', 222, 934, 6], ['H', 208, 994, 6], ['H', 135, 922, 5],
  ['H', 152, 940, 7], ['H', 122, 984, 6], ['H', 148, 975, 7], ['H', 157, 995, 6], ['H', 145, 1005, 6], ['H', 76, 1017, 7], ['H', 72, 1065, 6], ['H', 50, 1065, 7], ['H', 20, 1078, 8],
  ['H', 118, 1062, 7], ['H', 140, 1078, 7], ['H', 162, 1068, 6], ['H', 92, 1112, 7], ['H', 78, 1134, 5], ['H', 132, 1122, 7], ['H', 168, 1118, 7], ['H', 125, 1165, 7], ['H', 140, 1142, 5],
  ['H', 497, 1012, 6], ['H', 478, 1040, 4], ['H', 430, 1068, 5], ['H', 365, 1132, 5], ['H', 534, 245, 6], ['H', 545, 282, 4], ['H', 510, 327, 5], ['H', 535, 315, 5], ['H', 508, 355, 5], ['H', 540, 355, 6], ['H', 525, 385, 5], ['H', 618, 1045, 5], ['H', 676, 1045, 5],
  ['G', 1243, 271, 6], ['G', 523, 648, 7], ['G', 510, 700, 7], ['G', 558, 748, 6], ['G', 538, 829, 6],
  ['B', 85, 1120, 5], ['B', 110, 1118, 5], ['A', 178, 80, 3], ['A', 92, 190, 3], ['A', 1558, 1088, 5], ['A', 1465, 1060, 5], ['A', 85, 270, 5], ['A', 265, 250, 6],
];

const TOWNS = [
  'A 272,62 452,192 1088,240 1250,90 1523,540 1326,715', 'B 5,780 1112,630 1258,865 1187,997 1446,1001 739,1152', 'F 1021,60 1268,42 1035,190 1035,348 1276,780',
  'C 940,216 1043,264 1343,72 1410,348 1308,414 1057,702 1424,702 1183,792 1040,960 990,1140 1192,1020 1434,972',
  'D 157,90 287,210 457,264 111,372 291,414 372,594 511,660 143,708 76,894 224,858 470,912 179,984 367,1152 967,468', 'E 886,168', 'G 435,108 1272,72 654,510 1370,276', 'H 93,48',
].flatMap(parse);

const CAPITALS = [
  'A 739,473 1510,295 479,750 1335,803', 'B 295,102 847,390 1044,457', 'C 103,936', 'D 793,131 515,1140', 'E 1142,612', 'G 1146,204 1102,876', 'H 483,665',
].flatMap(parse);

/* sheet, left, right, baseline, name */
const CITY_NAMES = [
  ['A', 368, 540, 168, 'Antalya'], ['A', 1010, 1165, 320, 'الموصل'], ['A', 675, 803, 562, 'دمشق'], ['A', 417, 543, 712, 'القاهرة'], ['A', 1457, 1558, 260, 'تهران'],
  ['A', 1350, 1500, 568, 'اصفهان'], ['A', 1262, 1387, 690, 'البصرة'], ['A', 1203, 1462, 890, 'مدينة الكويت'], ['A', 1208, 1290, 70, 'تبریز'], ['B', -55, 50, 762, 'شیراز'],
  ['B', 203, 390, 186, 'Aşgabat'], ['B', 805, 888, 488, 'كابل'], ['B', 958, 1133, 418, 'اسلام آباد'], ['B', 1068, 1148, 700, 'لاہور'], ['B', 1198, 1313, 838, 'Delhi'],
  ['B', 1117, 1250, 1076, 'Jaipur'], ['B', 1345, 1545, 1070, 'Lucknow'], ['B', 680, 795, 1228, 'کراچی'], ['F', 880, 1158, 35, 'Ahmedabad'], ['F', 1285, 1445, 66, 'Bhopal'],
  ['C', 22, 185, 1025, 'काठमाडौं'], ['C', 868, 1012, 190, '西宁市'], ['C', 973, 1117, 348, '兰州市'], ['C', 1183, 1325, 102, '榆林市'], ['D', -10, 135, 80, '石家庄'], ['D', 93, 135, 166, '市'],
  ['C', 1340, 1482, 325, '运城市'], ['D', 38, 182, 458, '郑州市'], ['C', 1233, 1377, 500, '西安市'], ['C', 985, 1128, 680, '成都市'], ['C', 1262, 1405, 735, '宜昌市'], ['D', 73, 217, 685, '武汉市'],
  ['C', 1112, 1255, 878, '重庆市'], ['D', 5, 147, 870, '长沙市'], ['C', 875, 1018, 993, '昭通市'], ['C', 917, 1060, 1113, '昆明市'], ['C', 1120, 1263, 1108, '贵阳市'], ['C', 1362, 1503, 1057, '邵阳市'], ['G', 1203, 1345, 50, '南宁市'],
  ['D', 220, 362, 88, '天津市'], ['D', 217, 360, 298, '济南市'], ['D', 475, 618, 292, '青岛市'], ['D', 312, 455, 443, '徐州市'], ['D', 302, 445, 568, '南京市'], ['D', 440, 582, 745, '上海市'],
  ['D', 243, 387, 888, '南昌市'], ['D', 492, 635, 943, '温州市'], ['D', 200, 343, 1013, '吉安市'], ['D', 445, 587, 1102, '臺北市'], ['D', 205, 347, 1180, '泉州市'], ['D', 822, 950, 118, '서울특'], ['D', 822, 908, 207, '별시'], ['D', 895, 1038, 553, '福岡市'],
  ['E', 848, 920, 228, 'جدة'], ['E', 1083, 1200, 572, 'صنعاء'], ['F', 973, 1090, 268, 'Surat'], ['F', 940, 1130, 423, 'Mumbai'], ['F', 1196, 1447, 447, 'Hyderabad'], ['F', 1157, 1395, 855, 'Bengaluru'],
  ['G', 363, 503, 203, 'চট্টগ্রাম'], ['G', 1073, 1225, 168, 'Hà Nội'], ['G', 1297, 1440, 252, '海口市'], ['H', 20, 162, 138, '广州市'], ['G', 583, 728, 590, 'ရန်ကုန်'], ['G', 1033, 1167, 935, 'រាជធានី'], ['G', 1040, 1160, 1017, 'ភ្នំពេញ'], ['H', 412, 560, 630, 'Manila'],
];

const COUNTRY_NAMES = [
  ['A', 790, 905, 388, 'سوريا'], ['A', 990, 1118, 522, 'العراق'], ['A', 680, 800, 675, 'الأردن'], ['A', 350, 445, 1010, 'مصر'], ['A', 1052, 1242, 1222, 'السعودية'], ['B', -108, 215, 1176, 'الإمارات العربية'], ['B', -27, 137, 1258, 'المتحدة'],
  ['B', 540, 750, 462, 'افغانستان'], ['B', 33, 130, 595, 'ایران'], ['B', 810, 980, 765, 'پاکستان'], ['B', 1502, 1612, 895, 'नेपाल'], ['C', 745, 840, 318, '中国'], ['G', 238, 443, 42, 'বাংলাদেশ'],
  ['D', 742, 925, 312, '대한민국'], ['H', 415, 512, 40, '臺灣'], ['E', 1240, 1355, 612, 'اليمن'], ['E', 322, 492, 628, 'السودان'], ['E', 703, 1015, 610, 'ኤርትራ Eritrea'], ['E', 808, 908, 690, 'إرتريا'], ['E', 728, 1025, 1080, 'ኢትዮጵያ إثيوبيا'],
  ['E', 217, 530, 1120, 'South Sudan'], ['E', 217, 527, 1200, 'جنوب السودان'], ['E', 45, 87, 1125, 'se'], ['E', 70, 88, 1204, '/'], ['F', 180, 290, 248, 'عمان'], ['F', 1288, 1412, 175, 'India'], ['F', 1320, 1548, 1160, 'Sri Lanka'],
  ['G', 552, 685, 385, 'မြန်မာ'], ['G', 980, 1195, 432, 'ປະເທດລາວ'], ['G', 1150, 1378, 612, 'Việt Nam'], ['G', 773, 1008, 802, 'ประเทศไทย'], ['H', 420, 692, 780, 'Philippines'],
];

const PlaceName = styled.text`
  fill: ${(p) => (p.$country ? '#8b6a8c' : '#454545')};
  stroke: rgba(255, 255, 255, 0.75);
  stroke-width: 4px;
  stroke-linejoin: round;
  paint-order: stroke;
  text-anchor: middle;
  font: 500 24px "Noto Sans", "Noto Sans CJK SC", "Noto Sans CJK KR", "DejaVu Sans", sans-serif;
`;

const Stroke = styled.path`
  fill: none;
  stroke: ${(p) => p.$color};
  stroke-width: ${(p) => p.$width}px;
  stroke-linejoin: round;
  stroke-linecap: round;
`;

const Names = ({ list, country }) =>
  list.map(([sheet, l, r, base, name]) => {
    const [x, y] = at(sheet, (l + r) / 2, base);
    return (
      <PlaceName key={name + l} $country={country} x={x} y={y + 0.7} textLength={(r - l) / 2.24} lengthAdjust="spacingAndGlyphs">
        {name}
      </PlaceName>
    );
  });

const VISITED = ['1048,246', '1231,480', '1321,468'].map((p) => parse('F ' + p)[0]);

const WorldMap = () => {
  const seas = SEAS.map((s) => shape(s, 0.09)).join('');
  const isles = ISLANDS.map((s) => shape(s, 0.14)).join('');
  return (
    <MapCanvas viewBox="0 0 2592 800">
      <rect width="2592" height="800" fill="#f0eee8" />
      <path d={seas} fill="#a5cfdd" stroke="#a5cfdd" strokeWidth="6" strokeLinejoin="round" />
      <path d={seas} fill="#b1d1dc" />
      <path d={isles} fill="#f0eee8" stroke="#a5cfdd" strokeWidth="7" strokeLinejoin="round" />
      <path d={isles} fill="#f0eee8" />
      {LAKES.map(([s, x, y, rx, ry]) => {
        const [cx, cy] = at(s, x, y);
        const ring = Array.from({ length: 9 }, (_, i) => {
          const a = (i / 9) * Math.PI * 2;
          const k = 1 + noise(cx + i, cy) * 0.45;
          return [cx + Math.cos(a) * rx * k, cy + Math.sin(a) * ry * k];
        });
        return <path key={s + x + y} d={toPath(ring, true)} fill="#add2de" />;
      })}
      <Stroke $color="#b9dce6" $width={2.2} d={RIVERS.map((r) => line(r)).join('')} />
      <Stroke $color="#d8c8d6" $width={2.2} d={REGIONS.map((r) => line(r, 0.22)).join('') + STRAIGHT_REGIONS.map((r) => toPath(parse(r))).join('')} />
      <Stroke $color="#c2aec4" $width={3.4} d={BORDERS.map((r) => line(r)).join('') + STRAIGHT_BORDERS.map((r) => toPath(parse(r))).join('')} />
      <Stroke $color="#9e9bb8" $width={2.3} d={MARITIME.map((r) => line(r, 0.03)).join('')} />
      {RINGS.map(([s, x, y, r]) => {
        const [cx, cy] = at(s, x, y);
        return <circle key={s + x + y} cx={cx} cy={cy} r={r * 0.88} fill="none" stroke="#9e9bb8" strokeWidth="2" />;
      })}
      {TOWNS.map(([x, y]) => (
        <circle key={x + '-' + y} cx={x} cy={y} r="3.2" fill="#fff" stroke="#80837a" strokeWidth="1.6" />
      ))}
      {CAPITALS.map(([x, y]) => (
        <g key={x + '-' + y}>
          <circle cx={x} cy={y} r="5.2" fill="#efeee6" stroke="#5b5e52" strokeWidth="1.8" />
          <circle cx={x} cy={y} r="2.2" fill="#45473e" />
        </g>
      ))}
      <Names list={COUNTRY_NAMES} country />
      <Names list={CITY_NAMES} />
      {VISITED.map(([x, y]) => (
        <circle key={x} cx={x} cy={y} r="13.5" fill="#438757" fillOpacity="0.93" stroke="#fff" strokeWidth="2" />
      ))}
    </MapCanvas>
  );
};

/* ---------- form ---------- */

const FormCard = styled(Card)`
  height: 420px;
  margin-top: 48px;
  padding: 27px 32px 0;
`;

const Fields = styled.div`
  display: grid;
  grid-template-columns: 1238px 1238px;
  column-gap: 48px;
  row-gap: 16px;
  margin-top: 11px;
`;

const Field = styled.div`
  display: flex;
  align-items: center;
  justify-content: space-between;
  height: 76px;
  padding: 2px 28px 0 24px;
  border: 2px solid #dee2e6;
  border-radius: 12px;
  color: ${(p) => (p.$value ? '#212529' : '#595c5f')};
  letter-spacing: -0.5px;
`;

const Stepper = styled.span`
  display: grid;
  place-items: center;
  width: 24px;
  height: 36px;
  border-radius: 10px;
  background: linear-gradient(#fff 47%, #d5d5d5 47%, #d5d5d5 53%, #fff 53%);
  box-shadow: 0 0 3px rgba(0, 0, 0, 0.45);
`;

const Scrollbar = styled.div`
  position: absolute;
  left: 4px;
  bottom: 0;
  width: 2848px;
  height: 8px;
  border-radius: 8px 8px 0 0;
  background: rgba(0, 0, 0, 0.5);
`;

const STATS = ['Total Places: 8', 'Visited: 3', 'Remaining: 5', 'Budget Spent: ₹ 68485', 'Completion: 38%'];

export default function App() {
  return (
    <Page>
      <GlobalStyle />
      <TabStrip>
        {[0, 1, 2, 3, 4, 5, 6, 7].map((n) => <TabEdge key={n} $active={n === 7} />)}
      </TabStrip>
      <Navbar>
        <NavSide>
          <LogoutButton>Logout</LogoutButton>
          <UserName>Shoaib</UserName>
        </NavSide>
        <Brand>Journey Junkie</Brand>
        <NavSide $end>
          <NavButton $w={150} $bg="#f8f9fa">Sign In</NavButton>
          <NavButton $w={167} $bg="#f5c344">Sign Up</NavButton>
        </NavSide>
      </Navbar>
      <Main>
        <ProgressCard $shadow="0 32px 96px rgba(0, 0, 0, 0.175)">
          <CardTitle $size={48} $ls={-1.7} $align="center">Travel Progress</CardTitle>
          <Stats>
            {STATS.map((s) => <span key={s}>{s}</span>)}
          </Stats>
        </ProgressCard>
        <Filters>
          <FilterButton $w={276} $color="#316df6" $filled $radius="12px 0 0 12px">All Destinations</FilterButton>
          <FilterButton $w={231} $color="#448859" $open $radius="0">Want to Visit</FilterButton>
          <FilterButton $w={151} $color="#5fc5ea" $radius="0 12px 12px 0">Visited</FilterButton>
        </Filters>
        <MapFrame>
          <WorldMap />
          <ZoomControl>
            <ZoomButton $first aria-label="Zoom in">
              <svg width="26" height="26" viewBox="0 0 26 26"><path d="M0.5 13h25M13 1v24" stroke="#000" strokeWidth="4.6" /></svg>
            </ZoomButton>
            <ZoomButton aria-label="Zoom out">
              <svg width="26" height="26" viewBox="0 0 26 26"><path d="M0.5 13h25" stroke="#000" strokeWidth="4.6" /></svg>
            </ZoomButton>
          </ZoomControl>
          <Attribution>
            <Flag />
            <LeafletLink>Leaflet</LeafletLink> | © OpenStreetMap contributors
          </Attribution>
        </MapFrame>
        <FormCard $shadow="0 16px 32px rgba(0, 0, 0, 0.15)">
          <CardTitle $size={40} $ls={-1.1} $align="left">Add New Destination</CardTitle>
          <Fields>
            <Field>City</Field>
            <Field>Country</Field>
            <Field>
              Budget (₹)
              <Stepper>
                <svg width="12" height="30" viewBox="0 0 12 30" fill="none" stroke="#222" strokeWidth="2.6" strokeLinecap="round" strokeLinejoin="round">
                  <path d="M1.5 9.5L6 4.5l4.500 5M1.500 20.500L6 25.500l4.500-5" />
                </svg>
              </Stepper>
            </Field>
            <Field $value>
              High
              <svg width="24" height="16" viewBox="0 0 24 16" fill="none" stroke="#343a40" strokeWidth="3.4" strokeLinecap="round" strokeLinejoin="round">
                <path d="M2.500 3L12 12.500 21.500 3" />
              </svg>
            </Field>
          </Fields>
        </FormCard>
      </Main>
      <Scrollbar />
    </Page>
  );
}
